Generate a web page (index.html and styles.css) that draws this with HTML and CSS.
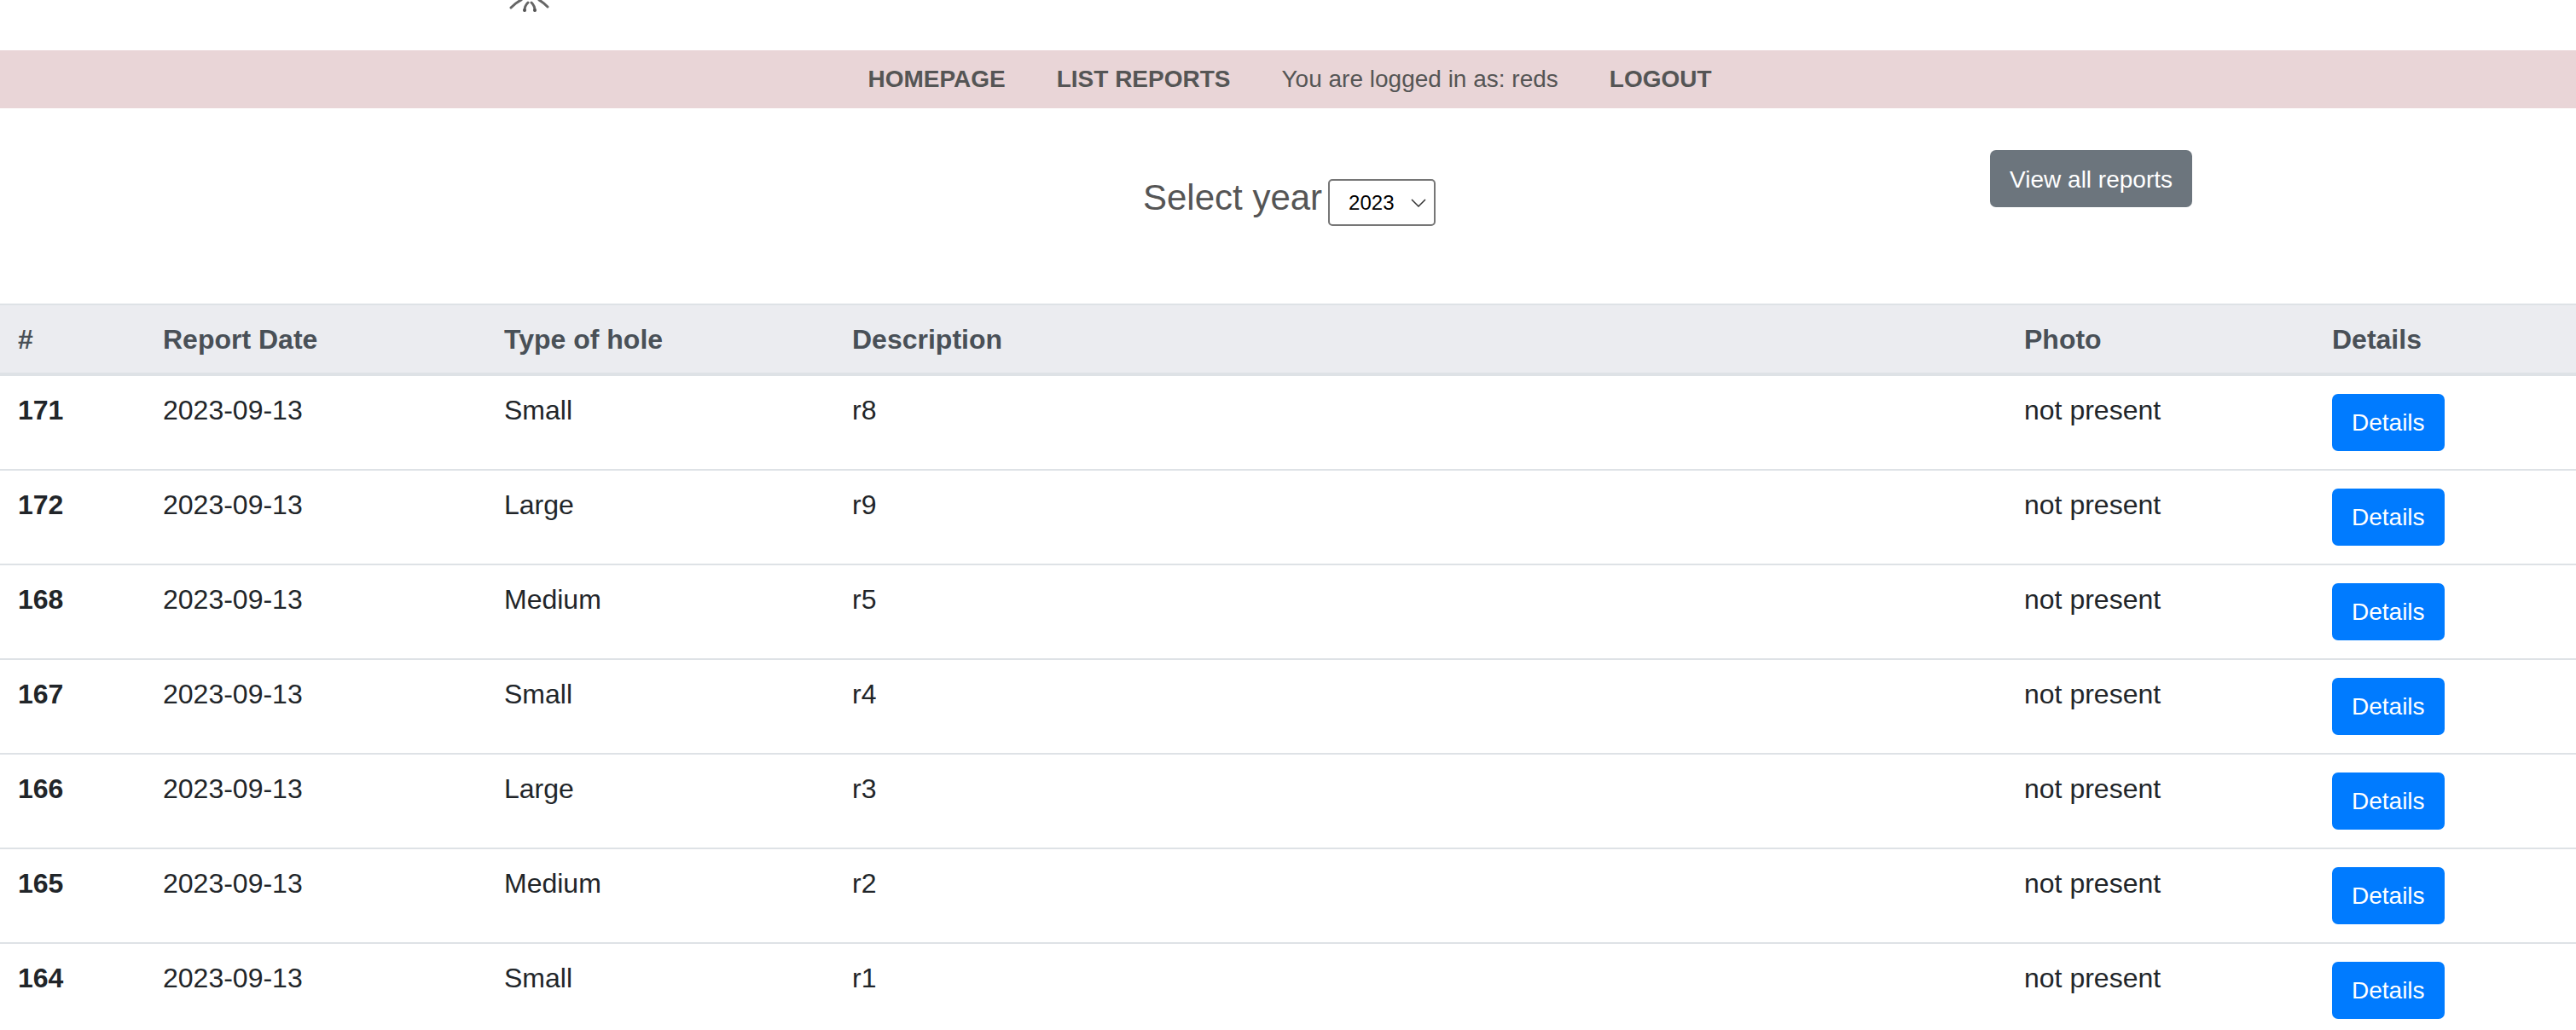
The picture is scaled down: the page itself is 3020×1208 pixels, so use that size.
FILE: index.html
```html
<!DOCTYPE html>
<html lang="en">

<head>
    <meta charset="UTF-8" />
    <meta name="viewport" content="width=device-width, initial-scale=1.0" />
    <title>Reports</title>
    <link rel="stylesheet" href="styles.css">
</head>

<body>
    <header class="logo-bar">
        <svg class="logo" width="48" height="14" viewBox="0 0 48 14" aria-hidden="true">
            <path d="M2 9 Q8 3 14 0 M45 8 Q40 3 35 0 M18 12 Q18 7 22 3 M30 12 Q30 7 26 3" />
            <circle cx="18" cy="12" r="2" />
            <circle cx="30" cy="12" r="2" />
        </svg>
    </header>

    <nav class="main-nav">
        <a href="#">HOMEPAGE</a>
        <a href="#">LIST REPORTS</a>
        <span>You are logged in as: reds</span>
        <a href="#">LOGOUT</a>
    </nav>

    <div class="toolbar">
        <form class="year-form">
            <label for="year">Select year</label>
            <select name="year" id="year">
                <option>2023</option>
                <option>2022</option>
            </select>
        </form>
        <a class="btn btn-grey" href="#">View all reports</a>
    </div>

    <table class="reports">
        <colgroup>
            <col class="col-id">
            <col class="col-date">
            <col class="col-type">
            <col class="col-desc">
            <col class="col-photo">
            <col class="col-details">
        </colgroup>
        <thead>
            <tr>
                <th>#</th>
                <th>Report Date</th>
                <th>Type of hole</th>
                <th>Description</th>
                <th>Photo</th>
                <th>Details</th>
            </tr>
        </thead>
        <tbody>
            <tr>
                <th>171</th>
                <td>2023-09-13</td>
                <td>Small</td>
                <td>r8</td>
                <td>not present</td>
                <td><a class="btn btn-blue" href="#">Details</a></td>
            </tr>
            <tr>
                <th>172</th>
                <td>2023-09-13</td>
                <td>Large</td>
                <td>r9</td>
                <td>not present</td>
                <td><a class="btn btn-blue" href="#">Details</a></td>
            </tr>
            <tr>
                <th>168</th>
                <td>2023-09-13</td>
                <td>Medium</td>
                <td>r5</td>
                <td>not present</td>
                <td><a class="btn btn-blue" href="#">Details</a></td>
            </tr>
            <tr>
                <th>167</th>
                <td>2023-09-13</td>
                <td>Small</td>
                <td>r4</td>
                <td>not present</td>
                <td><a class="btn btn-blue" href="#">Details</a></td>
            </tr>
            <tr>
                <th>166</th>
                <td>2023-09-13</td>
                <td>Large</td>
                <td>r3</td>
                <td>not present</td>
                <td><a class="btn btn-blue" href="#">Details</a></td>
            </tr>
            <tr>
                <th>165</th>
                <td>2023-09-13</td>
                <td>Medium</td>
                <td>r2</td>
                <td>not present</td>
                <td><a class="btn btn-blue" href="#">Details</a></td>
            </tr>
            <tr>
                <th>164</th>
                <td>2023-09-13</td>
                <td>Small</td>
                <td>r1</td>
                <td>not present</td>
                <td><a class="btn btn-blue" href="#">Details</a></td>
            </tr>
        </tbody>
    </table>
</body>

</html>
```

FILE: styles.css
```css
html,
body {
    overflow: hidden;
}

body {
    margin: 0;
    font-family: "Liberation Sans", Arial, sans-serif;
    font-size: 32px;
    line-height: 42px;
    color: #212529;
    background: #fff;
}

a {
    text-decoration: none;
}

.logo-bar {
    height: 59px;
    padding-left: 597px;
}

.logo {
    display: block;
}

.logo path {
    fill: none;
    stroke: #666;
    stroke-width: 3;
    stroke-linecap: round;
}

.logo circle {
    fill: #555;
}

.main-nav {
    display: flex;
    justify-content: center;
    align-items: center;
    gap: 60px;
    height: 68px;
    padding-left: 4px;
    background: #e9d5d7;
    color: #555;
    font-size: 28px;
}

.main-nav a {
    color: #555;
    font-weight: bold;
}

.toolbar {
    display: flex;
    align-items: flex-start;
    justify-content: space-between;
    height: 229px;
    padding: 49px 450px 0 1340px;
    box-sizing: border-box;
}

.year-form {
    display: flex;
    align-items: flex-start;
    gap: 7px;
    margin-top: 34px;
    height: 55px;
    color: #555;
    font-size: 42px;
}

.year-form label {
    margin-top: 1px;
}

.year-form select {
    appearance: none;
    width: 126px;
    height: 55px;
    padding: 0 22px;
    font-family: inherit;
    font-size: 24px;
    color: #000;
    background: #fff url("data:image/svg+xml,%3Csvg xmlns='http://www.w3.org/2000/svg' width='18' height='10' viewBox='0 0 18 10'%3E%3Cpath d='M1 1l8 8 8-8' fill='none' stroke='%23333' stroke-width='1.5'/%3E%3C/svg%3E") no-repeat right 9px center;
    border: 2px solid #767676;
    border-radius: 5px;
}

.btn {
    display: inline-block;
    height: 67px;
    box-sizing: border-box;
    padding: 13px 23px;
    font-size: 28px;
    line-height: 42px;
    color: #fff;
    border-radius: 7px;
}

.btn-grey {
    padding-top: 14px;
    background: #6c757d;
}

.btn-blue {
    margin-top: 2px;
    background: #007bff;
    vertical-align: top;
}

.reports {
    width: 100%;
    border-collapse: collapse;
    table-layout: fixed;
}

.col-id {
    width: 170px;
}

.col-date {
    width: 400px;
}

.col-type {
    width: 408px;
}

.col-desc {
    width: 1374px;
}

.col-photo {
    width: 361px;
}

.reports th,
.reports td {
    padding: 19px 21px 21px;
    text-align: left;
    vertical-align: top;
    border-top: 2px solid #dee2e6;
}

.reports thead th {
    height: 81px;
    box-sizing: border-box;
    padding: 19px 21px 18px;
    color: #495057;
    background: #ebecf0;
    border-bottom: 4px solid #dee2e6;
}
```
